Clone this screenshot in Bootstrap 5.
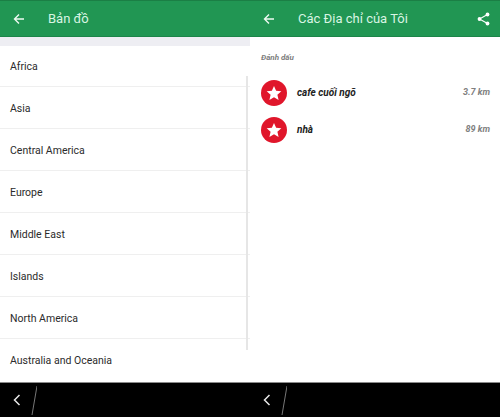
<!DOCTYPE html>
<html lang="en">
<head>
  <meta charset="UTF-8">
  <meta name="viewport" content="width=device-width, initial-scale=1.0">
  <title>Bản đồ</title>
  <link href="https://cdn.jsdelivr.net/npm/bootstrap@5.3.0/dist/css/bootstrap.min.css" rel="stylesheet">
  <style>
    html, body {
      height: 100%;
      overflow: hidden;
      background: #fff;
      font-family: Roboto, "Liberation Sans", sans-serif;
    }
    .app-screen {
      height: 382px;
    }
    .app-pane {
      width: 250px;
      position: relative;
    }
    .app-bar {
      height: 37px;
      background: #219653;
      border-top: 1px solid #1b7f45;
      border-bottom: 1px solid #1c8549;
      color: #d9f5e3;
      font-size: 13px;
      padding-left: 13px;
      padding-right: 10px;
    }
    .app-bar-title {
      margin-left: 23px;
    }
    .shade-strip {
      height: 9px;
      background: #eeeef3;
    }
    .area-row {
      height: 42px;
      padding-left: 10px;
      padding-top: 2px;
      font-size: 10.5px;
      color: #2b2b2b;
      border-bottom: 1px solid #efefef;
    }
    .area-row:first-child {
      height: 41px;
    }
    .area-row:last-child {
      border-bottom: 0;
    }
    .scroll-thumb {
      position: absolute;
      left: 246px;
      top: 76px;
      width: 2px;
      height: 274px;
      background: #e6e6e6;
    }
    .saved-head {
      padding: 15px 0 0 11px;
      font-size: 8px;
      font-weight: 700;
      font-style: italic;
      color: #7d7d7d;
      height: 37px;
    }
    .saved-row {
      height: 37px;
      padding: 0 10px 0 11px;
      font-style: italic;
      font-weight: 700;
    }
    .saved-name {
      margin-left: 10px;
      font-size: 10px;
      color: #222;
    }
    .saved-dist {
      font-size: 9px;
      color: #808080;
    }
    .pin-round {
      width: 26px;
      height: 26px;
      border-radius: 50%;
      background: #e0162b;
    }
    .sys-bar {
      height: 35px;
      background: #000;
      border-top: 1px solid #8a8a8a;
    }
    .sys-half {
      width: 250px;
      padding-left: 13px;
    }
  </style>
</head>
<body>
  <div class="d-flex app-screen">
    <div class="app-pane">
      <div class="app-bar d-flex align-items-center">
        <svg width="12" height="12" viewBox="0 0 12 12" fill="none" stroke="#eefaf2" stroke-width="1.4"><path d="M11 6H1.5M6 1.5 1.5 6 6 10.5"/></svg>
        <span class="app-bar-title">Bản đồ</span>
      </div>
      <div class="shade-strip"></div>
      <div class="d-flex flex-column">
        <div class="area-row d-flex align-items-center">Africa</div>
        <div class="area-row d-flex align-items-center">Asia</div>
        <div class="area-row d-flex align-items-center">Central America</div>
        <div class="area-row d-flex align-items-center">Europe</div>
        <div class="area-row d-flex align-items-center">Middle East</div>
        <div class="area-row d-flex align-items-center">Islands</div>
        <div class="area-row d-flex align-items-center">North America</div>
        <div class="area-row d-flex align-items-center">Australia and Oceania</div>
      </div>
      <div class="scroll-thumb"></div>
    </div>
    <div class="app-pane">
      <div class="app-bar d-flex align-items-center">
        <svg width="12" height="12" viewBox="0 0 12 12" fill="none" stroke="#eefaf2" stroke-width="1.4"><path d="M11 6H1.5M6 1.5 1.5 6 6 10.5"/></svg>
        <span class="app-bar-title">Các Địa chỉ của Tôi</span>
        <svg class="ms-auto" width="13" height="14" viewBox="0 0 13 14" fill="#fff" stroke="#fff"><circle cx="10.5" cy="2.5" r="1.9" stroke="none"/><circle cx="2.5" cy="7" r="1.9" stroke="none"/><circle cx="10.5" cy="11.5" r="1.9" stroke="none"/><path d="M10.5 2.5 2.5 7l8 4.5" fill="none" stroke-width="1.1"/></svg>
      </div>
      <div class="saved-head">Đánh dấu</div>
      <div class="saved-row d-flex align-items-center">
        <div class="pin-round d-flex align-items-center justify-content-center">
          <svg width="16" height="16" viewBox="0 0 24 24" fill="#fff"><path d="M12 1.5l3.2 7.2 7.8.8-5.9 5.2 1.8 7.8L12 18.4l-6.9 4.1 1.8-7.8L1 9.5l7.8-.8z"/></svg>
        </div>
        <span class="saved-name">cafe cuối ngõ</span>
        <span class="saved-dist ms-auto">3.7 km</span>
      </div>
      <div class="saved-row d-flex align-items-center">
        <div class="pin-round d-flex align-items-center justify-content-center">
          <svg width="16" height="16" viewBox="0 0 24 24" fill="#fff"><path d="M12 1.5l3.2 7.2 7.8.8-5.9 5.2 1.8 7.8L12 18.4l-6.9 4.1 1.8-7.8L1 9.5l7.8-.8z"/></svg>
        </div>
        <span class="saved-name">nhà</span>
        <span class="saved-dist ms-auto">89 km</span>
      </div>
    </div>
  </div>
  <div class="sys-bar d-flex">
    <div class="sys-half d-flex align-items-center">
      <svg width="24" height="34" viewBox="0 0 24 34" fill="none" stroke="#e8e8e8"><path d="M6.5 12 1.5 17l5 5" stroke-width="1.5"/><path d="M24 3 19 32" stroke="#777" stroke-width="1"/></svg>
    </div>
    <div class="sys-half d-flex align-items-center">
      <svg width="24" height="34" viewBox="0 0 24 34" fill="none" stroke="#e8e8e8"><path d="M6.5 12 1.5 17l5 5" stroke-width="1.5"/><path d="M24 3 19 32" stroke="#777" stroke-width="1"/></svg>
    </div>
  </div>
  <script src="https://cdn.jsdelivr.net/npm/bootstrap@5.3.0/dist/js/bootstrap.bundle.min.js"></script>
</body>
</html>
